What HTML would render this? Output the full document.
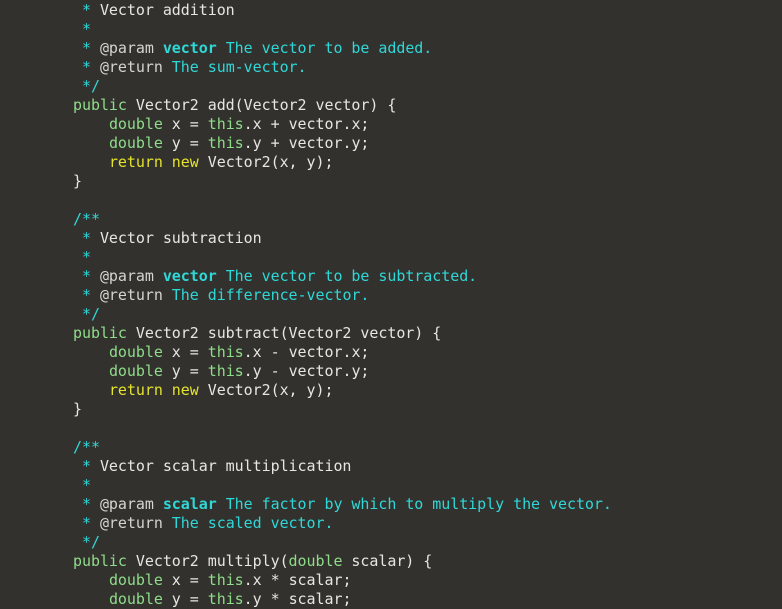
<!DOCTYPE html><html><head><style>
html,body{margin:0;padding:0;background:#32312d;width:782px;height:597px;overflow:hidden}
pre{margin:0;position:absolute;left:73px;top:1px;font-family:"DejaVu Sans Mono","Liberation Mono",monospace;font-size:15px;letter-spacing:-0.05px;line-height:19px;color:#e6e6e2}
.c{color:#2fd8d8}.b{color:#2fd8d8;font-weight:bold}.t{color:#d6d4cf}.k{color:#8fdc8a}.y{color:#e4e32d}
</style></head><body><pre><span class="c"> *</span> Vector addition
<span class="c"> *</span>
<span class="c"> *</span> <span class="t">@param</span> <span class="b">vector</span><span class="c"> The vector to be added.</span>
<span class="c"> *</span> <span class="t">@return</span><span class="c"> The sum-vector.</span>
<span class="c"> */</span>
<span class="k">public</span> Vector2 add(Vector2 vector) {
    <span class="k">double</span> x = <span class="k">this</span>.x + vector.x;
    <span class="k">double</span> y = <span class="k">this</span>.y + vector.y;
    <span class="y">return new</span> Vector2(x, y);
}

<span class="c">/**</span>
<span class="c"> *</span> Vector subtraction
<span class="c"> *</span>
<span class="c"> *</span> <span class="t">@param</span> <span class="b">vector</span><span class="c"> The vector to be subtracted.</span>
<span class="c"> *</span> <span class="t">@return</span><span class="c"> The difference-vector.</span>
<span class="c"> */</span>
<span class="k">public</span> Vector2 subtract(Vector2 vector) {
    <span class="k">double</span> x = <span class="k">this</span>.x - vector.x;
    <span class="k">double</span> y = <span class="k">this</span>.y - vector.y;
    <span class="y">return new</span> Vector2(x, y);
}

<span class="c">/**</span>
<span class="c"> *</span> Vector scalar multiplication
<span class="c"> *</span>
<span class="c"> *</span> <span class="t">@param</span> <span class="b">scalar</span><span class="c"> The factor by which to multiply the vector.</span>
<span class="c"> *</span> <span class="t">@return</span><span class="c"> The scaled vector.</span>
<span class="c"> */</span>
<span class="k">public</span> Vector2 multiply(<span class="k">double</span> scalar) {
    <span class="k">double</span> x = <span class="k">this</span>.x * scalar;
    <span class="k">double</span> y = <span class="k">this</span>.y * scalar;
</pre></body></html>
